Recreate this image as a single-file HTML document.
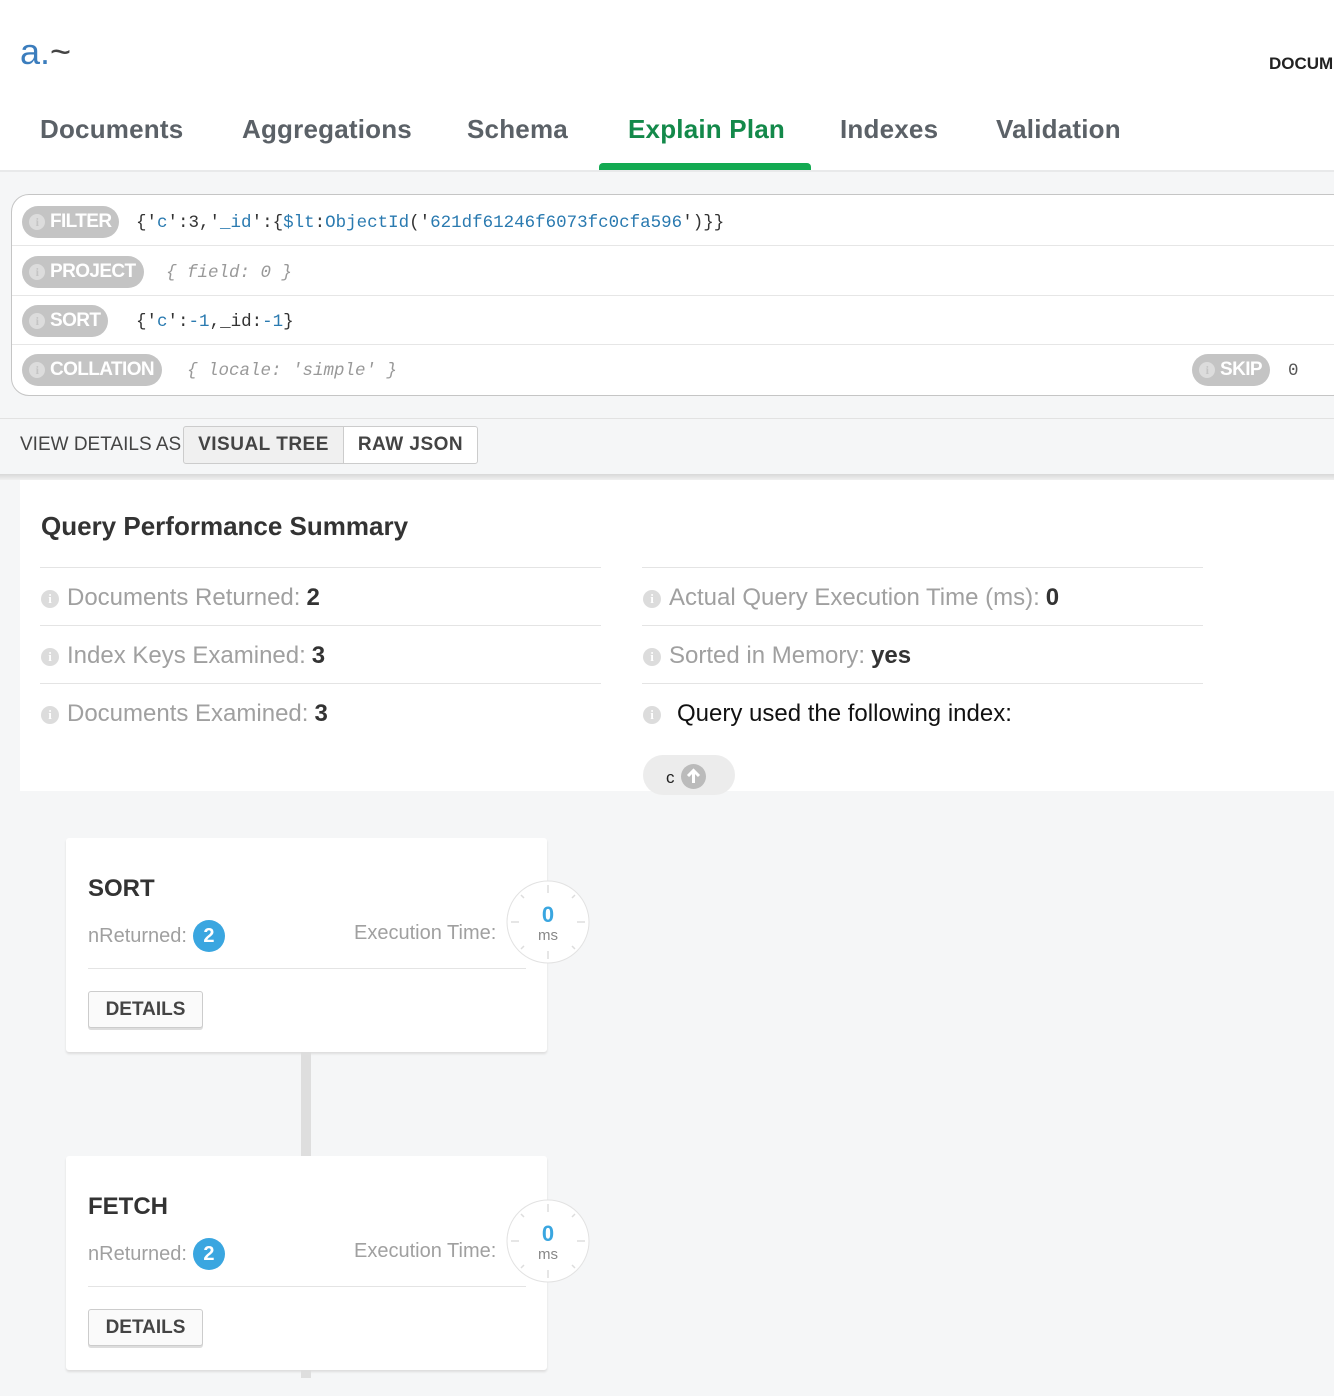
<!DOCTYPE html>
<html><head><meta charset="utf-8"><style>
*{box-sizing:border-box;margin:0;padding:0}
body{width:1334px;height:1396px;overflow:hidden;background:#f5f6f7;font-family:"Liberation Sans",sans-serif;position:relative}
.a{position:absolute;white-space:nowrap}
.top{left:0;top:0;width:1334px;height:172px;background:#fff;border-bottom:2px solid #e8e9ea}
.tab{font-size:26px;font-weight:bold;color:#5b6167;top:114px;letter-spacing:0.2px}
.qbox{left:11px;top:194px;width:1340px;height:202px;background:#fff;border:1px solid #c5c5c5;border-radius:18px}
.row{position:absolute;left:0;right:0;height:49px;border-bottom:1px solid #e6e6e6}
.pill{position:absolute;top:9px;height:32px;border-radius:16px;background:#c4c4c4;color:#fff;font-weight:bold;font-size:19px;line-height:32px;padding:0 8px 0 28px;letter-spacing:-0.6px}
.pill:before{content:"i";position:absolute;left:7px;top:8px;width:16px;height:16px;border-radius:50%;background:#dcdcdc;color:#c4c4c4;font-size:12px;line-height:16px;text-align:center;font-family:"Liberation Serif",serif}
.code{position:absolute;top:16px;font-family:"Liberation Mono",monospace;font-size:17.5px;color:#333}
.b{color:#2a7ab0}
.it{font-style:italic;color:#999}
.btn{position:absolute;top:426px;height:38px;border:1px solid #ccc;background:#fff;font-size:19px;font-weight:bold;color:#444;line-height:36px;text-align:center;letter-spacing:0.5px}
.lbl{font-size:24px;color:#a0a0a0}
.lbl b{color:#333;margin-left:6px}
.ic{display:inline-block;width:18px;height:18px;border-radius:50%;background:#dcdcdc;color:#fff;font-size:13px;line-height:18px;text-align:center;font-weight:bold;font-family:"Liberation Serif",serif;vertical-align:2px;margin-right:8px}
.hl{height:1px;background:#e4e4e4}
.card{position:absolute;left:66px;width:481px;height:214px;background:#fff;border-radius:3px;box-shadow:0 2px 2px #ddd}
.card h3{position:absolute;left:22px;top:37px;font-size:24px;color:#333}
.nr{position:absolute;left:22px;top:82px;font-size:20px;color:#a0a0a0}
.badge{display:inline-block;width:32px;height:32px;border-radius:50%;background:#3aa6e0;color:#fff;font-weight:bold;text-align:center;line-height:32px;margin-left:6px}
.et{position:absolute;left:288px;top:84px;font-size:20px;color:#a0a0a0}
.det{position:absolute;left:22px;top:153px;width:115px;height:37px;border:1px solid #ccc;border-radius:3px;background:#fafafa;box-shadow:0 2px 0 #ddd;font-size:19px;font-weight:bold;color:#444;text-align:center;line-height:35px}
</style></head><body>
<div class="a top"></div>
<div class="a" style="left:20px;top:31px;font-size:36px;color:#3b7dbd">a.<span style="color:#444">~</span></div>
<div class="a" style="left:1269px;top:54px;font-size:17px;font-weight:bold;color:#222">DOCUMENTS</div>
<div class="a tab" style="left:40px">Documents</div>
<div class="a tab" style="left:242px">Aggregations</div>
<div class="a tab" style="left:467px">Schema</div>
<div class="a tab" style="left:628px;color:#13894a">Explain Plan</div>
<div class="a tab" style="left:840px">Indexes</div>
<div class="a tab" style="left:996px">Validation</div>
<div class="a" style="left:599px;top:163px;width:212px;height:7px;background:#13aa52;border-radius:4px 4px 0 0"></div>

<div class="a qbox">
 <div class="row" style="top:2px"><div class="pill" style="left:10px">FILTER</div><div class="code" style="left:124px">{'<span class="b">c</span>':3,'<span class="b">_id</span>':{<span class="b">$lt</span>:<span class="b">ObjectId</span>('<span class="b">621df61246f6073fc0cfa596</span>')}}</div></div>
 <div class="row" style="top:52px"><div class="pill" style="left:10px">PROJECT</div><div class="code it" style="left:154px">{ field: 0 }</div></div>
 <div class="row" style="top:101px"><div class="pill" style="left:10px">SORT</div><div class="code" style="left:124px">{'<span class="b">c</span>':<span class="b">-1</span>,_id:<span class="b">-1</span>}</div></div>
 <div class="row" style="top:150px;border:none"><div class="pill" style="left:10px">COLLATION</div><div class="code it" style="left:175px">{ locale: 'simple' }</div>
 <div class="pill" style="left:1180px">SKIP</div><div class="code" style="left:1276px;color:#555">0</div></div>
</div>

<div class="a" style="left:0;top:418px;width:1334px;height:1px;background:#e2e2e2"></div>
<div class="a" style="left:20px;top:434px;font-size:19px;color:#444">VIEW DETAILS AS</div>
<div class="btn" style="left:183px;width:161px;background:#f0f0f0;border-radius:3px 0 0 3px">VISUAL TREE</div>
<div class="btn" style="left:343px;width:135px;border-radius:0 3px 3px 0">RAW JSON</div>
<div class="a" style="left:0;top:474px;width:1334px;height:6px;background:linear-gradient(#d8d8d8,#f0f0f0)"></div>

<div class="a" style="left:20px;top:480px;width:1314px;height:311px;background:#fff"></div>
<div class="a" style="left:41px;top:511px;font-size:26px;font-weight:bold;color:#333">Query Performance Summary</div>
<div class="a hl" style="left:40px;top:567px;width:561px"></div>
<div class="a hl" style="left:40px;top:625px;width:561px"></div>
<div class="a hl" style="left:40px;top:683px;width:561px"></div>
<div class="a hl" style="left:642px;top:567px;width:561px"></div>
<div class="a hl" style="left:642px;top:625px;width:561px"></div>
<div class="a hl" style="left:642px;top:683px;width:561px"></div>
<div class="a lbl" style="left:41px;top:584px"><span class="ic">i</span>Documents Returned:<b>2</b></div>
<div class="a lbl" style="left:41px;top:642px"><span class="ic">i</span>Index Keys Examined:<b>3</b></div>
<div class="a lbl" style="left:41px;top:700px"><span class="ic">i</span>Documents Examined:<b>3</b></div>
<div class="a lbl" style="left:643px;top:584px"><span class="ic">i</span>Actual Query Execution Time (ms):<b>0</b></div>
<div class="a lbl" style="left:643px;top:642px"><span class="ic">i</span>Sorted in Memory:<b>yes</b></div>
<div class="a lbl" style="left:643px;top:700px"><span class="ic">i</span><span style="color:#111;margin-left:8px">Query used the following index:</span></div>
<div class="a" style="left:643px;top:755px;width:92px;height:40px;border-radius:20px;background:#ececec"></div>
<div class="a" style="left:666px;top:768px;font-size:17px;color:#222">c</div>
<div class="a" style="left:681px;top:764px;width:25px;height:25px;border-radius:50%;background:#bbb"><svg width="25" height="25"><path d="M12.5 19V7M7 12l5.5-5.5L18 12" stroke="#fff" stroke-width="3" fill="none"/></svg></div>

<div class="a" style="left:301px;top:1052px;width:10px;height:104px;background:#dedede"></div>
<div class="a" style="left:301px;top:1368px;width:10px;height:10px;background:#dedede"></div>

<div class="card" style="top:838px"><h3>SORT</h3>
<div class="nr">nReturned:<span class="badge">2</span></div><div class="et">Execution Time:</div>
<div class="a hl" style="left:22px;top:130px;width:438px"></div>
<div class="det">DETAILS</div></div>
<div class="card" style="top:1156px"><h3>FETCH</h3>
<div class="nr">nReturned:<span class="badge">2</span></div><div class="et">Execution Time:</div>
<div class="a hl" style="left:22px;top:130px;width:438px"></div>
<div class="det">DETAILS</div></div>

<svg class="a" style="left:506px;top:880px" width="84" height="84"><circle cx="42" cy="42" r="41" fill="#fff" stroke="#e2e2e2"/><g stroke="#ddd" stroke-width="1.5"><path d="M42 5v8M42 71v8M5 42h8M71 42h8M15 15l3 3M69 15l-3 3M15 69l3-3M69 69l-3-3"/></g><text x="42" y="42" text-anchor="middle" font-family="Liberation Sans" font-weight="bold" font-size="22" fill="#3aa6e0">0</text><text x="42" y="60" text-anchor="middle" font-family="Liberation Sans" font-size="15" fill="#888">ms</text></svg>
<svg class="a" style="left:506px;top:1199px" width="84" height="84"><circle cx="42" cy="42" r="41" fill="#fff" stroke="#e2e2e2"/><g stroke="#ddd" stroke-width="1.5"><path d="M42 5v8M42 71v8M5 42h8M71 42h8M15 15l3 3M69 15l-3 3M15 69l3-3M69 69l-3-3"/></g><text x="42" y="42" text-anchor="middle" font-family="Liberation Sans" font-weight="bold" font-size="22" fill="#3aa6e0">0</text><text x="42" y="60" text-anchor="middle" font-family="Liberation Sans" font-size="15" fill="#888">ms</text></svg>
</body></html>
